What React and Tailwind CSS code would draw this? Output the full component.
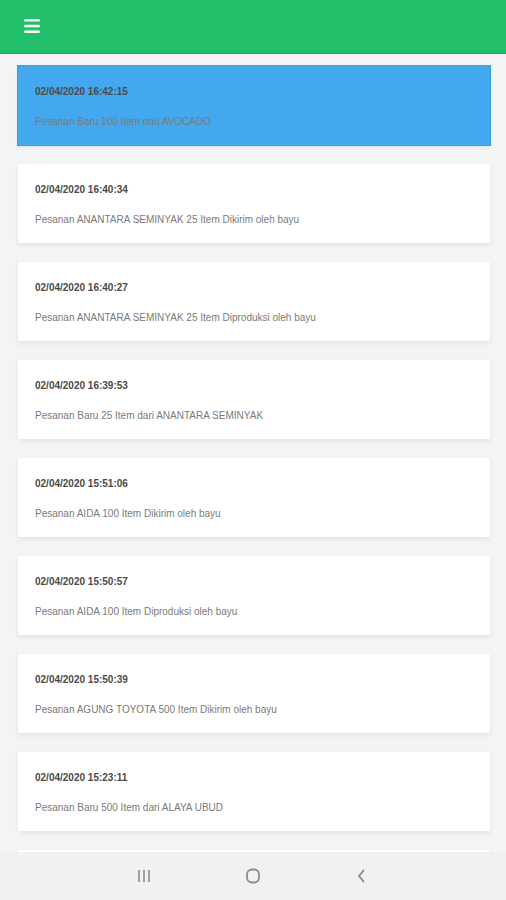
import { Menu } from "lucide-react";

const notifications = [
  { time: "02/04/2020 16:42:15", text: "Pesanan Baru 100 Item dari AVOCADO", active: true },
  { time: "02/04/2020 16:40:34", text: "Pesanan ANANTARA SEMINYAK 25 Item Dikirim oleh bayu" },
  { time: "02/04/2020 16:40:27", text: "Pesanan ANANTARA SEMINYAK 25 Item Diproduksi oleh bayu" },
  { time: "02/04/2020 16:39:53", text: "Pesanan Baru 25 Item dari ANANTARA SEMINYAK" },
  { time: "02/04/2020 15:51:06", text: "Pesanan AIDA 100 Item Dikirim oleh bayu" },
  { time: "02/04/2020 15:50:57", text: "Pesanan AIDA 100 Item Diproduksi oleh bayu" },
  { time: "02/04/2020 15:50:39", text: "Pesanan AGUNG TOYOTA 500 Item Dikirim oleh bayu" },
  { time: "02/04/2020 15:23:11", text: "Pesanan Baru 500 Item dari ALAYA UBUD" },
];

function NotificationCard({ item }) {
  return (
    <div
      className={`h-[79px] shrink-0 px-[17px] pt-[19px] shadow-[0_2px_5px_rgba(0,0,0,0.08)] ${
        item.active ? "bg-[#44a8ee] ring-1 ring-[#3a9be0]" : "bg-white"
      }`}
    >
      <p className="text-[10px] leading-[14px] font-bold text-[#4a4a4a]">{item.time}</p>
      <p className="mt-[16px] text-[10px] leading-[14px] text-[#7a7a7a]">{item.text}</p>
    </div>
  );
}

export default function App() {
  return (
    <div className="h-screen flex flex-col bg-[#f3f4f6] overflow-hidden" style={{ fontFamily: '"Liberation Sans", Arial, sans-serif' }}>
      {/* Header */}
      <div className="h-[54px] shrink-0 bg-[#22c06b] border-b-2 border-[#1fb364] flex items-center px-[22px]">
        <Menu className="w-[20px] h-[20px] text-white" strokeWidth={3} />
      </div>

      {/* List */}
      <div className="flex-1 overflow-hidden pl-[18px] pr-[16px] pt-[12px] flex flex-col gap-[19px]">
        {notifications.map((item) => (
          <NotificationCard key={item.time} item={item} />
        ))}
        {/* next card, mostly hidden under the nav bar */}
        <div className="h-[79px] shrink-0 bg-white shadow-[0_2px_5px_rgba(0,0,0,0.08)]" />
      </div>

      {/* Android nav bar */}
      <div className="h-[48px] shrink-0 bg-[#f1f1f1] flex items-center justify-around px-[90px] text-[#8a8a8a]">
        <svg width="16" height="16" viewBox="0 0 16 16" fill="none" stroke="currentColor" strokeWidth="1.6">
          <path d="M3 2v12M8 2v12M13 2v12" />
        </svg>
        <svg width="18" height="18" viewBox="0 0 18 18" fill="none" stroke="currentColor" strokeWidth="1.8">
          <rect x="3" y="2.5" width="12" height="13" rx="5" />
        </svg>
        <svg width="16" height="16" viewBox="0 0 16 16" fill="none" stroke="currentColor" strokeWidth="1.8">
          <path d="M10 2L5 8l5 6" />
        </svg>
      </div>
    </div>
  );
}
